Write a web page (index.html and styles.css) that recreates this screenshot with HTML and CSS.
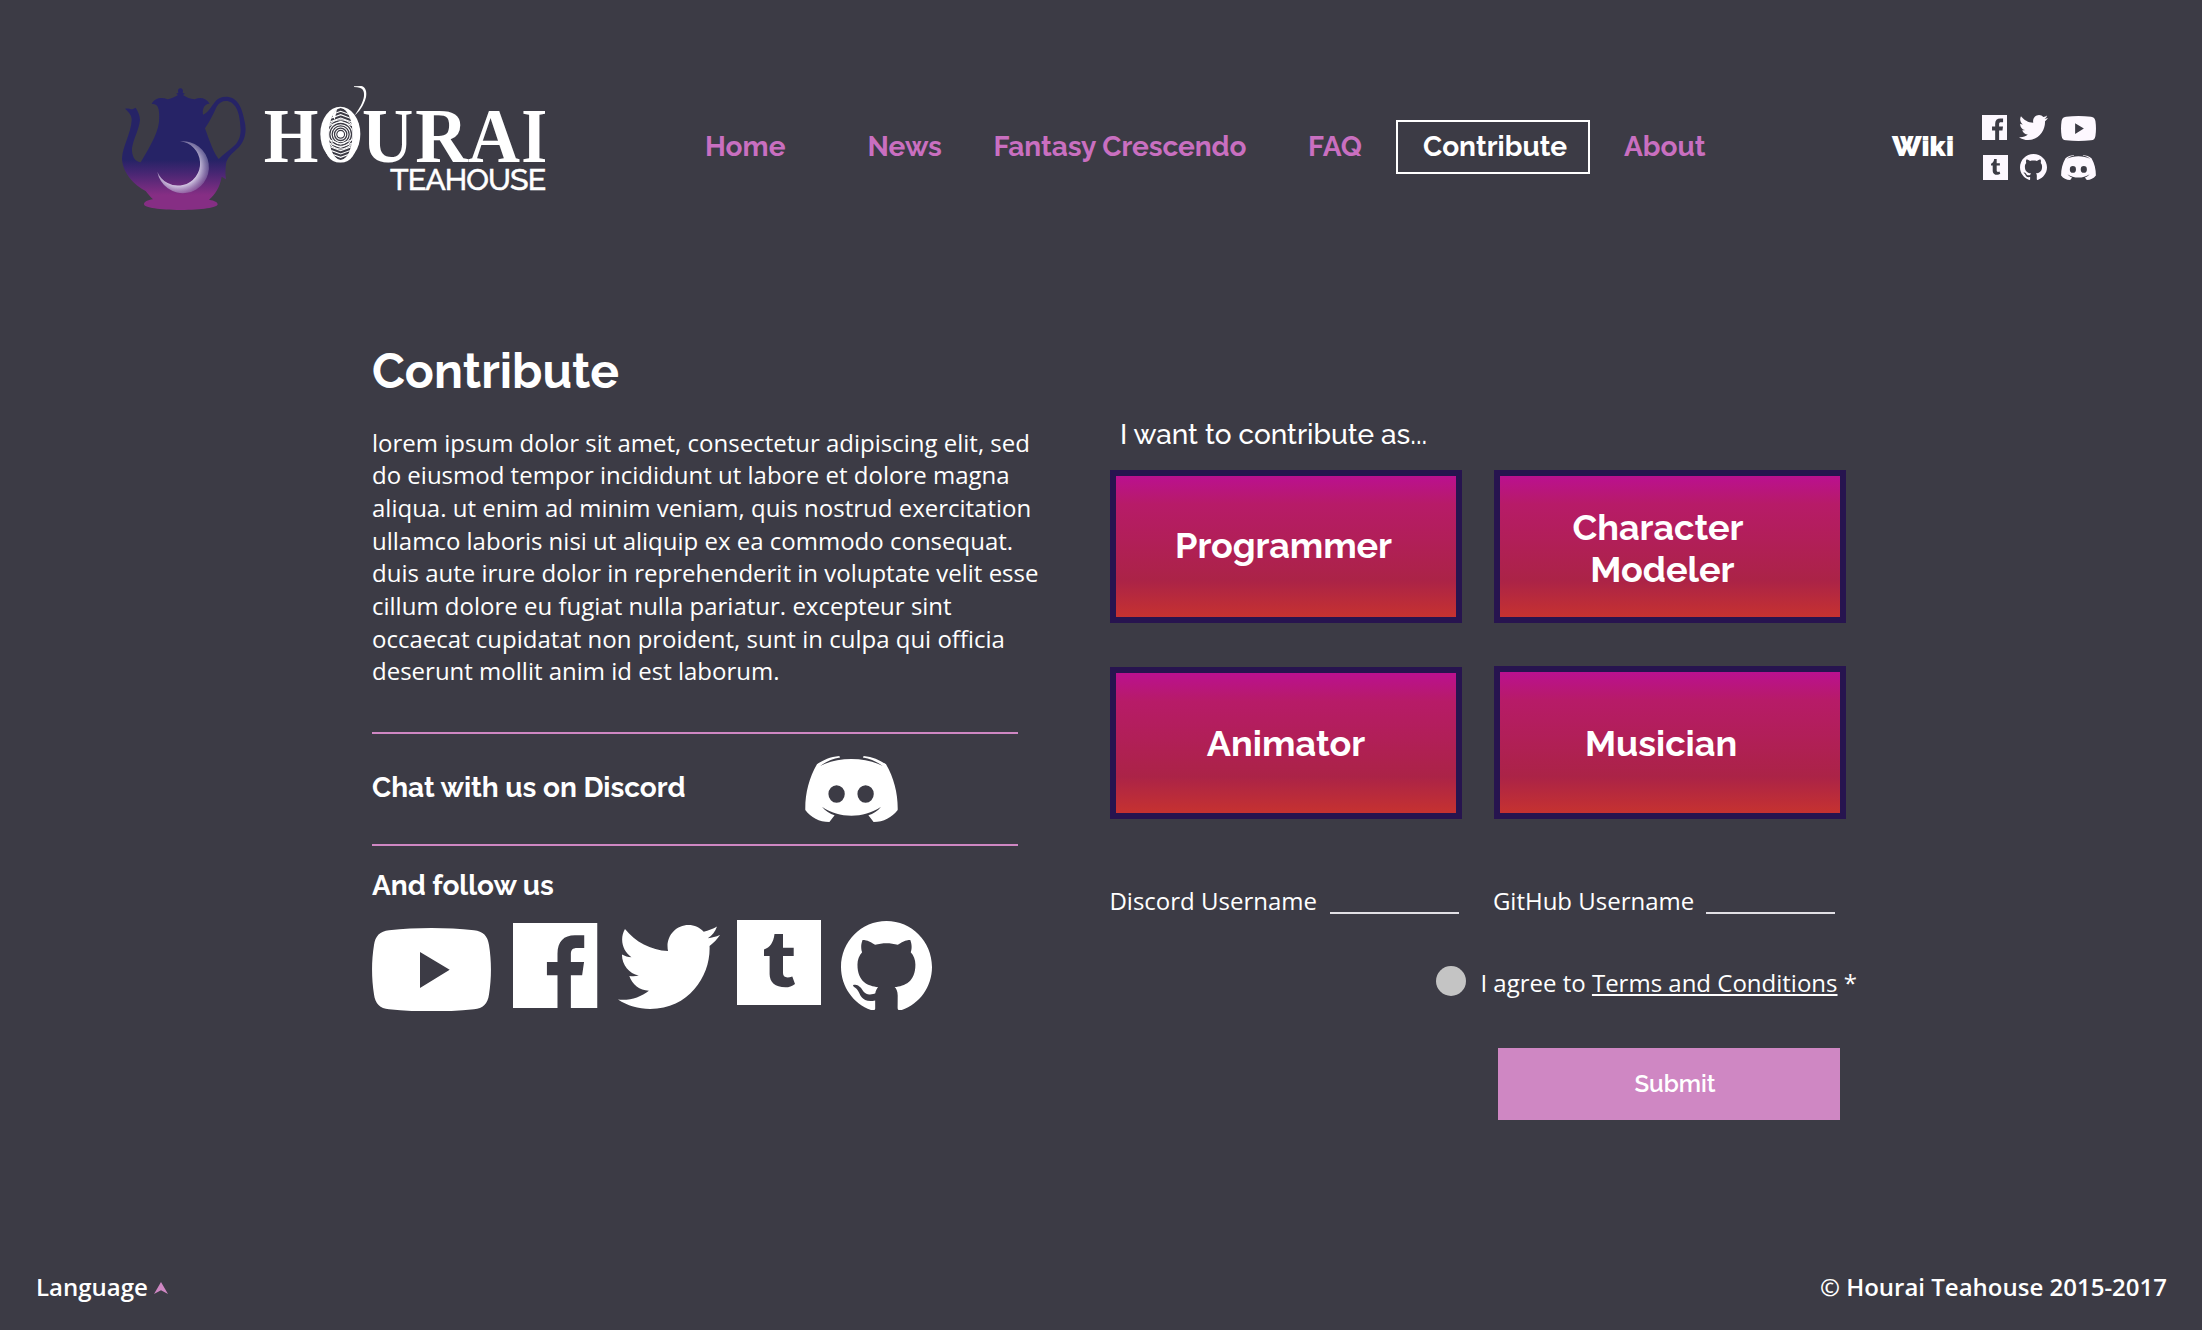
FILE: index.html
```html
<!DOCTYPE html>
<html lang="en">
<head>
<meta charset="utf-8">
<title>Contribute - Hourai Teahouse</title>
<link rel="stylesheet" href="styles.css">
</head>
<body>
<svg class="sprite" aria-hidden="true">
  <symbol id="youtube" viewBox="0 0 119 83.4" preserveAspectRatio="none">
    <path fill-rule="evenodd" d="M2 17C3.2 8 8 3 17 2.2C45-.7 74-.7 102 2.2C111 3 115.800 8 117 17C119.600 33 119.600 50 117 66.400C115.800 75.400 111 80.400 102 81.200C74 84.100 45 84.100 17 81.200C8 80.400 3.200 75.400 2 66.400C-.6 50-.6 33 2 17ZM48 24V60L77.700 41.700Z"/>
  </symbol>
  <symbol id="facebook" viewBox="0 0 84.700 85" preserveAspectRatio="none">
    <path fill-rule="evenodd" d="M0 0H84.700V85H58V52.300H69.300L71.200 39H58V31.500C58 27 59.500 25 64.500 25H71.400V12.300H62C51 12.300 44.600 18.500 44.600 31V39H34V52.300H44.600V85H0Z"/>
  </symbol>
  <symbol id="twitter" viewBox="0 2.246 24 19.510" preserveAspectRatio="none">
    <path d="M23.954 4.569c-.885.389-1.830.654-2.825.775 1.014-.611 1.794-1.574 2.163-2.723-.951.555-2.005.959-3.127 1.184-.896-.959-2.173-1.559-3.591-1.559-2.717 0-4.920 2.203-4.920 4.917 0 .39.045.765.127 1.124C7.691 8.094 4.066 6.130 1.640 3.161c-.427.722-.666 1.561-.666 2.475 0 1.710.87 3.213 2.188 4.096-.807-.026-1.566-.248-2.228-.616v.061c0 2.385 1.693 4.374 3.946 4.827-.413.111-.849.171-1.296.171-.314 0-.615-.03-.916-.086.631 1.953 2.445 3.377 4.604 3.417-1.680 1.319-3.809 2.105-6.102 2.105-.39 0-.779-.023-1.170-.067 2.189 1.394 4.768 2.209 7.557 2.209 9.054 0 13.999-7.496 13.999-13.986 0-.209 0-.42-.015-.63.961-.689 1.800-1.560 2.460-2.548z"/>
  </symbol>
  <symbol id="tumblr" viewBox="0 0 84 85" preserveAspectRatio="none">
    <path fill-rule="evenodd" d="M0 0H84V85H0ZM37.500 14C36.500 22.500 33 27.500 27 29.500V36H32.600V54C32.600 62 38 67.300 48.500 67.300C52 67.300 55 66.500 58 64L55.300 56.500C49 58.500 46 57 46 53V36H56.700V27.700H46V14Z"/>
  </symbol>
  <symbol id="github" viewBox="0 .297 24 23.410" preserveAspectRatio="none">
    <path d="M12 .297c-6.630 0-12 5.373-12 12 0 5.303 3.438 9.800 8.205 11.385.6.113.82-.258.82-.577 0-.285-.010-1.040-.015-2.040-3.338.724-4.042-1.610-4.042-1.610C4.422 18.070 3.633 17.700 3.633 17.700c-1.087-.744.084-.729.084-.729 1.205.084 1.838 1.236 1.838 1.236 1.070 1.835 2.809 1.305 3.495.998.108-.776.417-1.305.76-1.605-2.665-.3-5.466-1.332-5.466-5.930 0-1.310.465-2.380 1.235-3.220-.135-.303-.54-1.523.105-3.176 0 0 1.005-.322 3.300 1.230.96-.267 1.980-.399 3-.405 1.020.006 2.040.138 3 .405 2.280-1.552 3.285-1.230 3.285-1.230.645 1.653.24 2.873.12 3.176.765.84 1.230 1.910 1.230 3.220 0 4.610-2.805 5.625-5.475 5.920.42.36.81 1.096.81 2.220 0 1.606-.015 2.896-.015 3.286 0 .315.210.69.825.57C20.565 22.092 24 17.592 24 12.297c0-6.627-5.373-12-12-12"/>
  </symbol>
  <symbol id="discord" viewBox="0 0 93.300 66" preserveAspectRatio="none">
    <path fill-rule="evenodd" d="M34.400 0C25 1 18 4 12 8.300C4 22 0 38 .3 54C6 61.500 14 66 24.500 66L29.700 59.200C25 57.800 20.500 55 17 50.700C26 57 36 59.700 46.600 59.700C57 59.700 67 57 76.300 50.700C73 55 68.500 57.800 63.600 59.200L68.800 66C79 66 87 61.500 93 54C93.300 38 89.300 22 81.300 8.300C75 4 68 1 58.900 0L58 1.500C66 3 73 6 78 10C69 5.500 58 3 46.600 3C35 3 24 5.500 15.300 10C20 6 27 3 35.200 1.500ZM23.500 38A8.200 8.800 0 1 0 39.900 38A8.200 8.800 0 1 0 23.500 38ZM52.600 38A8.200 8.800 0 1 0 69 38A8.200 8.800 0 1 0 52.600 38Z"/>
  </symbol>
</svg>

<header class="header">
  <svg class="logo" viewBox="0 0 1440 480" role="img" aria-label="Hourai Teahouse">
    <defs>
      <linearGradient id="dusk" gradientUnits="userSpaceOnUse" x1="0" y1="240" x2="0" y2="345">
        <stop offset="0" stop-color="#262366"/>
        <stop offset=".35" stop-color="#452672"/>
        <stop offset="1" stop-color="#862e84"/>
      </linearGradient>
      <radialGradient id="glow" gradientUnits="userSpaceOnUse" cx="189" cy="249" r="97">
        <stop offset=".66" stop-color="#e4dcf0"/>
        <stop offset="1" stop-color="#a79cc8" stop-opacity=".35"/>
      </radialGradient>
      <linearGradient id="fade" gradientUnits="userSpaceOnUse" x1="190" y1="184" x2="235" y2="300">
        <stop offset="0" stop-color="#fff" stop-opacity=".45"/>
        <stop offset="1" stop-color="#fff"/>
      </linearGradient>
      <mask id="moonfade" maskUnits="userSpaceOnUse" x="100" y="170" width="200" height="190"><rect x="100" y="170" width="200" height="190" fill="url(#fade)"/></mask>
      <clipPath id="core"><ellipse cx="722" cy="192" rx="36" ry="78"/></clipPath>
    </defs>
    <g transform="translate(45 30)">
      <path fill="url(#dusk)" fill-rule="evenodd" d="M196 25C202 25 206 31 203 38L210 41L204 45C214 52 226 57 239 58C256 50 275 55 284 71C274 71 267 77 265 86C262 93 264 98 264 104C280 97 288 80 300 65C312 50 335 46 356 56C378 70 385 102 391 135C395 165 385 188 370 203C355 218 335 232 333 252C331 270 331 285 333 298L320 290C315 320 300 345 282 359C300 362 308 367 308 373C308 383 260 390 197 390C135 390 87 383 87 373C87 365 98 360 114 358C105 350 98 340 92 333C58 315 22 280 21 235C22 215 28 200 35 180C42 160 49 140 50 120C50 108 44 98 30 86C38 84 45 87 52 88L62 83C68 92 75 105 75 120C72 150 56 175 51 205C50 225 58 246 77 247C95 215 128 165 132 125C133 105 133 90 128 80C124 73 118 71 110 72C118 54 140 50 158 58C170 55 180 50 189 45L183 41L190 38C187 31 190 25 196 25ZM270 145C285 187 297 220 311 237C325 222 345 210 360 195C372 182 379 165 376 140C374 105 368 82 350 68C335 58 315 62 305 80C295 103 285 122 270 145Z"/>
      <path fill="url(#glow)" mask="url(#moonfade)" d="M195 184A78 78 0 1 1 127 275A66.500 66.500 0 1 0 195 184Z"/>
    </g>
    <text class="wordmark" y="275"><tspan x="491" textLength="164" lengthAdjust="spacingAndGlyphs">H</tspan><tspan x="663" textLength="116" lengthAdjust="spacingAndGlyphs">O</tspan><tspan x="786" textLength="154" lengthAdjust="spacingAndGlyphs">U</tspan><tspan x="946" textLength="158" lengthAdjust="spacingAndGlyphs">R</tspan><tspan x="1104" textLength="156" lengthAdjust="spacingAndGlyphs">A</tspan><tspan x="1264" textLength="78" lengthAdjust="spacingAndGlyphs">I</tspan></text>
    <ellipse cx="721" cy="192" rx="60" ry="82" fill="#fff"/>
    <g clip-path="url(#core)">
      <ellipse class="core-bg" cx="722" cy="192" rx="36" ry="78"/>
      <g class="rings">
        <circle cx="722" cy="193" r="8"/><circle cx="722" cy="193" r="15"/><circle cx="722" cy="193" r="22"/><circle cx="722" cy="193" r="29"/><circle cx="722" cy="193" r="36"/><circle cx="722" cy="193" r="44"/>
        <path d="M684 148l38-14 38 14M684 138l38-14 38 14M684 158l38-14 38 14M684 168l38-14 38 14M684 218l38 14 38-14M684 228l38 14 38-14M684 238l38 14 38-14M684 248l38 14 38-14M684 208l38 14 38-14"/>
      </g>
      <circle cx="722" cy="193" r="9" fill="#fff"/>
      <path fill="#fff" d="M692 112H712L704 150L698 138L690 150Z"/>
    </g>
    <path fill="#fff" d="M762 49L784 48C798 50 801 68 798 82C791 108 777 126 764 136C778 116 790 96 792 78C793 62 790 52 762 51Z"/>
    <text class="submark" x="870" y="360" textLength="468">TEAHOUSE</text>
  </svg>
  <nav class="nav">
    <a>Home</a><a>News</a><a class="game">Fantasy Crescendo</a><a>FAQ</a><a class="active">Contribute</a><a>About</a>
  </nav>
  <a class="wiki">Wiki</a>
  <div class="social">
    <svg class="s-facebook"><use href="#facebook"/></svg>
    <svg class="s-twitter"><use href="#twitter"/></svg>
    <svg class="s-youtube"><use href="#youtube"/></svg>
    <svg class="s-tumblr"><use href="#tumblr"/></svg>
    <svg class="s-github"><use href="#github"/></svg>
    <svg class="s-discord"><use href="#discord"/></svg>
  </div>
</header>

<main class="main">
  <section class="about">
    <h1>Contribute</h1>
    <p>lorem ipsum dolor sit amet, consectetur adipiscing elit, sed<br>do eiusmod tempor incididunt ut labore et dolore magna<br>aliqua. ut enim ad minim veniam, quis nostrud exercitation<br>ullamco laboris nisi ut aliquip ex ea commodo consequat.<br>duis aute irure dolor in reprehenderit in voluptate velit esse<br>cillum dolore eu fugiat nulla pariatur. excepteur sint<br>occaecat cupidatat non proident, sunt in culpa qui officia<br>deserunt mollit anim id est laborum.</p>
    <div class="chat">
      <h2>Chat with us on Discord</h2>
      <svg><use href="#discord"/></svg>
    </div>
    <h2 class="follow-title">And follow us</h2>
    <div class="follow">
      <svg class="f-youtube"><use href="#youtube"/></svg>
      <svg class="f-facebook"><use href="#facebook"/></svg>
      <svg class="f-twitter"><use href="#twitter"/></svg>
      <svg class="f-tumblr"><use href="#tumblr"/></svg>
      <svg class="f-github"><use href="#github"/></svg>
    </div>
  </section>

  <form class="apply">
    <p class="prompt">I want to contribute as...</p>
    <div class="roles">
      <div class="role programmer">Programmer</div>
      <div class="role modeler">Character<br>&nbsp;Modeler</div>
      <div class="role animator">Animator</div>
      <div class="role musician">Musician</div>
    </div>
    <div class="fields">
      <label for="discord-name">Discord Username</label><input id="discord-name" type="text">
      <label for="github-name">GitHub Username</label><input id="github-name" type="text">
    </div>
    <div class="agree"><span class="dot"></span><span>I agree to <u>Terms and Conditions</u> *</span></div>
    <button class="submit" type="button">Submit</button>
  </form>
</main>

<footer class="footer">
  <span class="language">Language <svg viewBox="0 0 14 12"><path d="M7 0L14 12L7 8.300L0 12Z"/></svg></span>
  <span>© Hourai Teahouse 2015-2017</span>
</footer>
</body>
</html>
```
FILE: styles.css
```css
* { box-sizing: border-box; }

body {
  margin: 0;
  min-height: 1330px;
  display: flex;
  flex-direction: column;
  background: #3c3b45;
  color: #fff;
  font: 400 24px/33px "Open Sans", sans-serif;
}

h1, h2, p { margin: 0; }
svg { display: block; fill: #fff; }
.sprite { display: none; }

.header {
  display: flex;
  align-items: flex-start;
  height: 230px;
  padding: 70px 0 0 100px;
  font: 700 28px/33px Raleway, Lato, sans-serif;
}
.logo { width: 480px; height: 160px; }
.wordmark { font: 700 233px "Liberation Serif", serif; }
.submark { font: 500 91px Raleway, Lato, sans-serif; stroke: #fff; stroke-width: 1.5px; }
.core-bg { fill: #3c3b45; }
.rings { fill: none; stroke: #fff; stroke-width: 3.2px; }

.nav {
  display: grid;
  grid-template-columns: 162.5px 126px 314.5px 88px 228px 268px;
  margin: 50px 0 0 125px;
  color: #c96fc0;
}
.nav a { padding: 10px 0 11px; }
.nav .game { letter-spacing: -.08px; }
.nav .active {
  width: 194px;
  padding: 8px 0 9px 25px;
  border: 2px solid #fff;
  color: #fff;
}
.wiki { width: 90px; margin-top: 60px; font-weight: 900; }

.social {
  display: grid;
  grid-template-columns: 37px 42px 35px;
  grid-auto-rows: 26px;
  row-gap: 13px;
  margin-top: 45px;
}
.social svg { fill: #fdf8ff; }
.s-facebook, .s-tumblr { width: 25px; height: 25px; }
.s-tumblr { margin: 1px 0 0 1px; }
.s-twitter { width: 29px; height: 25px; }
.s-youtube { width: 35px; height: 25px; margin-top: 1px; }
.s-github { width: 27px; height: 26px; margin-left: 1px; }
.s-discord { width: 35px; height: 25px; margin-top: 1px; }

.main { display: flex; padding-left: 372px; }
.about { width: 738px; padding-top: 113px; }
.about h1 { font: 700 48px/56px Raleway, Lato, sans-serif; }
.about p { margin-top: 27.5px; line-height: 32.68px; white-space: nowrap; }
.about h2 { font: 700 28px/33px Raleway, Lato, sans-serif; }
.chat {
  display: flex;
  width: 646px;
  height: 114px;
  margin-top: 44.06px;
  border: solid #cf87c3;
  border-width: 2px 0;
}
.chat h2 { width: 433px; padding-top: 36.5px; letter-spacing: -.05px; }
.chat svg { width: 93px; height: 66px; margin-top: 22px; }
.about .follow-title { margin-top: 23px; letter-spacing: -.05px; }
.follow { display: flex; margin-top: 18px; }
.f-youtube { width: 119px; height: 83.5px; margin: 7.5px 22px 0 0; }
.f-facebook { width: 84.5px; height: 85px; margin: 2.7px 20.5px 0 0; }
.f-twitter { width: 102px; height: 84px; margin: 4.7px 17px 0 0; }
.f-tumblr { width: 84px; height: 85px; margin-right: 20px; }
.f-github { width: 91px; height: 89.5px; margin-top: .7px; }

.apply { width: 746px; padding-top: 188px; }
.prompt { padding-left: 10px; font: 500 28px/33px Raleway, Lato, sans-serif; }
.roles {
  display: grid;
  grid-template-columns: 352px 352px;
  gap: 43.3px 32px;
  margin-top: 19px;
}
.role {
  display: flex;
  align-items: center;
  justify-content: center;
  height: 152.7px;
  border: 6px solid #27144f;
  background: linear-gradient(#bb1090, #b71b68 20%, #ab2347 74%, #c63230) padding-box;
  font: 700 36px/42px Raleway, Lato, sans-serif;
  text-align: center;
}
.programmer { padding: 0 5px 3px 0; letter-spacing: -.1px; }
.modeler { padding: 4px 24px 0 0; }
.animator { margin-top: .6px; margin-bottom: -.6px; }
.musician { padding: 2px 18px 0 0; }

.fields { display: flex; height: 30px; margin: 65px 0 0 -.6px; }
.fields label { width: 220.6px; white-space: nowrap; }
.fields label + input + label { width: 213.6px; }
.fields input {
  width: 128.5px;
  padding: 0;
  border: 0;
  border-bottom: 2px solid #e2e0e5;
  background: none;
}
.fields input:first-of-type { margin-right: 34.4px; }
.agree { display: flex; height: 30px; margin: 52px 0 0 326px; white-space: nowrap; }
.agree u { text-underline-offset: 2px; }
.dot { flex: none; width: 30px; height: 30px; margin-right: 14.4px; border-radius: 50%; background: #c4c4c4; }
.submit {
  display: block;
  width: 342px;
  height: 72px;
  margin: 52px 0 0 388px;
  padding: 0 0 0 12px;
  border: 0;
  background: #cf87c3;
  color: #fff;
  font: 600 24px/28px Raleway, Lato, sans-serif;
}

.footer {
  display: flex;
  justify-content: space-between;
  margin-top: auto;
  padding: 0 35px 27px 36px;
  font-weight: 600;
}
.language { display: flex; gap: 6.5px; }
.language svg { width: 14px; height: 12px; margin-top: 12px; fill: #cf87c3; }
```
